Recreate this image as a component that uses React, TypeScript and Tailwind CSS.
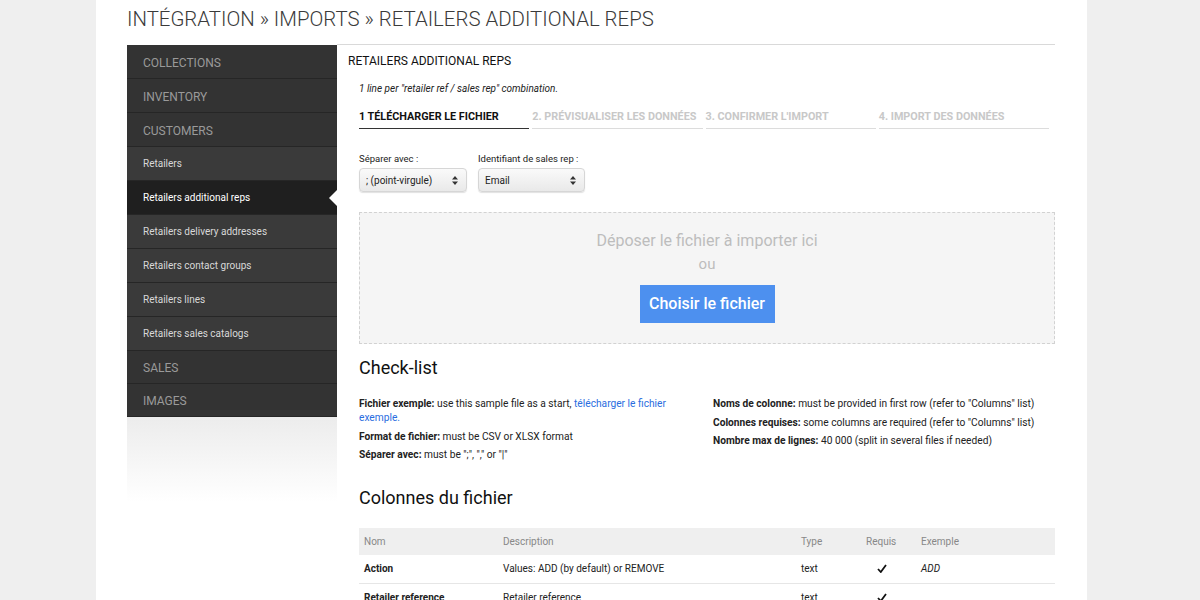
import React from "react";

const topMenu = ["COLLECTIONS", "INVENTORY", "CUSTOMERS"];
const subMenu = [
  "Retailers",
  "Retailers additional reps",
  "Retailers delivery addresses",
  "Retailers contact groups",
  "Retailers lines",
  "Retailers sales catalogs",
];
const bottomMenu = ["SALES", "IMAGES"];

const steps = [
  "1 TÉLÉCHARGER LE FICHIER",
  "2. PRÉVISUALISER LES DONNÉES",
  "3. CONFIRMER L'IMPORT",
  "4. IMPORT DES DONNÉES",
];

const columns = [
  { name: "Action", desc: "Values: ADD (by default) or REMOVE", type: "text", req: true, ex: "ADD" },
  { name: "Retailer reference", desc: "Retailer reference", type: "text", req: true, ex: "" },
];

const font = { fontFamily: "Roboto, 'Liberation Sans', sans-serif" };

const Select = ({ value, width }: { value: string; width: string }) => (
  <div
    className={`${width} h-[24px] flex items-center justify-between pl-[6px] pr-[8px] rounded-[4px] border border-[#d6d6d6] bg-gradient-to-b from-[#fafafa] to-[#e9e9e9] shadow-[0_1px_1px_rgba(0,0,0,0.12)] text-[10px] text-[#222]`}
  >
    <span>{value}</span>
    <svg width="6" height="9" viewBox="0 0 6 9">
      <path d="M3 0 L6 3.5 H0 Z M3 9 L6 5.5 H0 Z" fill="#333" />
    </svg>
  </div>
);

const Check = () => (
  <svg width="10" height="9" viewBox="0 0 10 9">
    <path d="M1 5 L3.8 8 L9 1" fill="none" stroke="#111" strokeWidth="1.8" />
  </svg>
);

export default function App() {
  return (
    <div className="min-h-screen bg-[#efefef] overflow-hidden" style={font}>
      <div className="ml-[96px] w-[991px] min-h-[600px] bg-white pl-[31px] pr-[32px]">
        <h1 className="h-[44px] pt-[6px] text-[20.4px] font-light text-[#3a3a3a] leading-[26px]">
          INTÉGRATION » IMPORTS » RETAILERS ADDITIONAL REPS
        </h1>

        <div className="flex">
          {/* sidebar */}
          <aside className="w-[210px] shrink-0 pt-[1px]">
            {topMenu.map((m) => (
              <div
                key={m}
                className="h-[34px] flex items-center pt-[2px] pl-[16px] bg-[#333] border-b border-[#262626] text-[12px] text-[#9a9a9a]"
              >
                {m}
              </div>
            ))}
            {subMenu.map((m) => {
              const active = m === "Retailers additional reps";
              return (
                <div
                  key={m}
                  className={`relative h-[34px] flex items-center pl-[16px] border-b border-[#262626] text-[10px] ${
                    active ? "bg-[#1f1f1f] text-white" : "bg-[#3a3a3a] text-[#d8d8d8]"
                  }`}
                >
                  {m}
                  {active && (
                    <span className="absolute right-0 top-1/2 -translate-y-1/2 w-0 h-0 border-y-[8px] border-y-transparent border-r-[8px] border-r-white" />
                  )}
                </div>
              );
            })}
            {bottomMenu.map((m) => (
              <div
                key={m}
                className="h-[33px] flex items-center pt-[2px] pl-[16px] bg-[#333] border-b border-[#262626] text-[12px] text-[#9a9a9a]"
              >
                {m}
              </div>
            ))}
            <div className="h-[85px] bg-gradient-to-b from-[#ececec] to-white" />
          </aside>

          {/* main */}
          <main className="flex-1 border-t border-[#d9d9d9] pl-[11px]">
            <h2 className="mt-[9px] text-[12px] text-[#111] leading-[14px]">RETAILERS ADDITIONAL REPS</h2>
            <div className="pl-[11px]">
              <p className="mt-[15px] text-[10px] italic text-[#222] leading-[12px]">
                1 line per "retailer ref / sales rep" combination.
              </p>

              <div className="mt-[15px] flex gap-[3px] w-[690px]">
                {steps.map((s, i) => (
                  <div
                    key={s}
                    className={`flex-1 pb-[4px] text-[10.8px] font-bold leading-[14px] whitespace-nowrap border-b ${
                      i === 0 ? "text-[#111] border-[#333]" : "text-[#c8c8c8] border-[#dcdcdc]"
                    }`}
                  >
                    {s}
                  </div>
                ))}
              </div>

              <div className="mt-[24px] flex gap-[11px]">
                <div>
                  <div className="text-[9.5px] text-[#222] leading-[12px] mb-[3px]">Séparer avec :</div>
                  <Select value="; (point-virgule)" width="w-[108px]" />
                </div>
                <div>
                  <div className="text-[9.5px] text-[#222] leading-[12px] mb-[3px]">Identifiant de sales rep :</div>
                  <Select value="Email" width="w-[107px]" />
                </div>
              </div>

              <div className="mt-[20px] h-[132px] border border-dashed border-[#d2d2d2] bg-[#f5f5f5] flex flex-col items-center pt-[18px]">
                <div className="text-[16px] text-[#bdbdbd] leading-[20px]">Déposer le fichier à importer ici</div>
                <div className="text-[15px] text-[#bdbdbd] leading-[20px] mt-[3px]">ou</div>
                <button className="mt-[11px] w-[135px] h-[38px] bg-[#4d90ef] text-white text-[16px] font-medium">
                  Choisir le fichier
                </button>
              </div>

              <h3 className="mt-[12px] text-[18px] text-[#111] leading-[24px]">Check-list</h3>

              <div className="mt-[17px] grid grid-cols-[354px_1fr] text-[10.2px] text-[#222] leading-[14px]">
                <div className="flex flex-col gap-[4.5px]">
                  <p className="pr-[40px]">
                    <b>Fichier exemple:</b> use this sample file as a start,{" "}
                    <span className="text-[#2a6de0]">télécharger le fichier exemple.</span>
                  </p>
                  <p>
                    <b>Format de fichier:</b> must be CSV or XLSX format
                  </p>
                  <p>
                    <b>Séparer avec:</b> must be ";", "," or "|"
                  </p>
                </div>
                <div className="flex flex-col gap-[4.5px]">
                  <p>
                    <b>Noms de colonne:</b> must be provided in first row (refer to "Columns" list)
                  </p>
                  <p>
                    <b>Colonnes requises:</b> some columns are required (refer to "Columns" list)
                  </p>
                  <p>
                    <b>Nombre max de lignes:</b> 40 000 (split in several files if needed)
                  </p>
                </div>
              </div>

              <h3 className="mt-[24px] text-[18px] text-[#111] leading-[24px]">Colonnes du fichier</h3>

              <table className="mt-[18px] w-full text-[10px] text-[#222]">
                <thead>
                  <tr className="bg-[#efefef] text-[#888] h-[27px] text-left">
                    <th className="font-normal pl-[5px] w-[144px]">Nom</th>
                    <th className="font-normal w-[298px]">Description</th>
                    <th className="font-normal w-[65px]">Type</th>
                    <th className="font-normal w-[55px]">Requis</th>
                    <th className="font-normal">Exemple</th>
                  </tr>
                </thead>
                <tbody>
                  {columns.map((c) => (
                    <tr key={c.name} className="h-[28px] border-b border-[#e6e6e6]">
                      <td className="pl-[5px] font-bold">{c.name}</td>
                      <td>{c.desc}</td>
                      <td>{c.type}</td>
                      <td className="pl-[11px]">{c.req && <Check />}</td>
                      <td className="italic">{c.ex}</td>
                    </tr>
                  ))}
                </tbody>
              </table>
            </div>
          </main>
        </div>
      </div>
    </div>
  );
}
